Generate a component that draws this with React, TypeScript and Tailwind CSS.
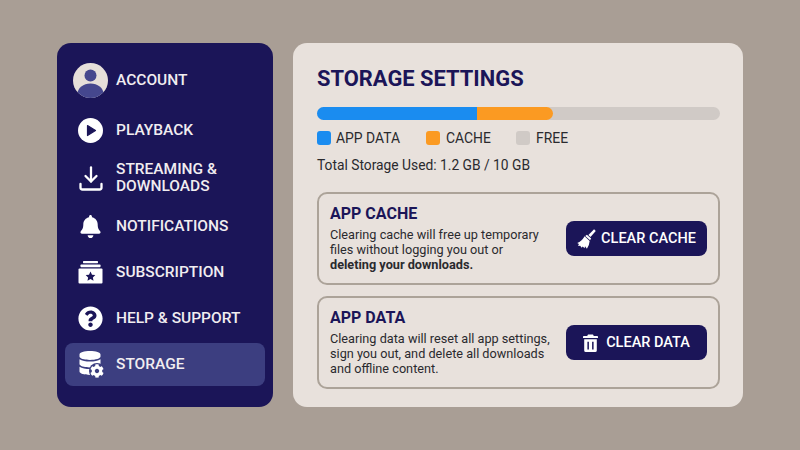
import type { ReactNode } from 'react'
import { FaBell, FaCog, FaDatabase, FaQuestionCircle } from 'react-icons/fa'

function Avatar() {
  return (
    <svg width="35" height="35" viewBox="0 0 35 35">
      <defs>
        <clipPath id="avatar-clip">
          <circle cx="17.5" cy="17.5" r="17.5" />
        </clipPath>
      </defs>
      <circle cx="17.5" cy="17.5" r="17.5" fill="#e6dfda" />
      <g clipPath="url(#avatar-clip)" fill="#45478e">
        <circle cx="17.5" cy="12.5" r="6" />
        <ellipse cx="17.5" cy="31" rx="13" ry="10.5" />
      </g>
    </svg>
  )
}

function PlayIcon() {
  return (
    <svg width="25" height="25" viewBox="0 0 25 25">
      <circle cx="12.5" cy="12.5" r="12.5" fill="#fff" />
      <path d="M9.5 7.5 L17.5 12.5 L9.5 17.5 Z" fill="#1b1558" stroke="#1b1558" strokeWidth="1.2" strokeLinejoin="round" />
    </svg>
  )
}

function DownloadIcon() {
  return (
    <svg width="24" height="25" viewBox="0 0 24 25" fill="none" stroke="#fff" strokeWidth="2.3" strokeLinecap="round" strokeLinejoin="round">
      <path d="M12 1.5 V15.5" />
      <path d="M6.5 10 L12 15.5 L17.5 10" />
      <path d="M1.5 18 V21.5 Q1.5 23.5 3.5 23.5 H20.5 Q22.5 23.5 22.5 21.5 V18" />
    </svg>
  )
}

function SubscriptionIcon() {
  return (
    <svg width="25" height="23" viewBox="0 0 25 23" fill="#fff">
      <rect x="5" y="0" width="15" height="2.2" rx="0.6" />
      <rect x="2.5" y="3.6" width="20" height="2.6" rx="0.6" />
      <path d="M1.5 7.5 H23.5 Q24.5 7.5 24.5 8.5 V21.5 Q24.5 22.5 23.5 22.5 H1.5 Q0.5 22.5 0.5 21.5 V8.5 Q0.5 7.5 1.5 7.5 Z" />
      <path
        d="M12.5 10.6 L14 13.7 L17.3 14.1 L14.9 16.4 L15.5 19.7 L12.5 18.1 L9.5 19.7 L10.1 16.4 L7.7 14.1 L11 13.7 Z"
        fill="#1b1558"
      />
    </svg>
  )
}

function StorageIcon() {
  return (
    <div className="relative w-[26px] h-[27px]">
      <FaDatabase size={24} color="#fff" />
      <div className="absolute right-[-1px] bottom-[-1px] w-[16px] h-[16px] rounded-full bg-[#3c3e80] flex items-center justify-center">
        <FaCog size={14} color="#fff" />
      </div>
    </div>
  )
}

function BroomIcon() {
  return (
    <svg width="19" height="20" viewBox="0 0 18 19" fill="#fff">
      <path d="M16.2 0.2 L17.8 1.8 L12.8 7.6 L10.8 5.8 Z" />
      <path d="M9.4 5.4 L13.4 9 L12.4 10.6 L7.8 6.6 Z" />
      <path d="M7.2 7 L12 11.3 Q11.8 15 9.4 18.8 L7.6 16.4 L7.2 18.4 L5.4 16.6 L4.4 17.8 L3 15.8 L1 16.2 L1.8 14.2 L0.2 13.2 Q4.4 12 7.2 7 Z" />
    </svg>
  )
}

function TrashIcon() {
  return (
    <svg width="15" height="18" viewBox="0 0 15 18" fill="#fff">
      <path d="M5 0.5 H10 L10.8 2 H14.2 Q15 2 15 2.8 V4 H0 V2.8 Q0 2 0.8 2 H4.2 Z" />
      <path
        fillRule="evenodd"
        d="M1.2 5.2 H13.8 V16.4 Q13.8 18 12.2 18 H2.8 Q1.2 18 1.2 16.4 Z M4.4 7.8 V15.4 H5.9 V7.8 Z M9.1 7.8 V15.4 H10.6 V7.8 Z"
      />
    </svg>
  )
}

type NavItem = { label: ReactNode; icon: ReactNode; rowClass: string }

const navItems: NavItem[] = [
  { label: 'ACCOUNT', icon: <Avatar />, rowClass: 'h-[42px]' },
  { label: 'PLAYBACK', icon: <PlayIcon />, rowClass: 'h-[42px] mt-[8px]' },
  {
    label: (
      <>
        STREAMING &amp;
        <br />
        DOWNLOADS
      </>
    ),
    icon: <DownloadIcon />,
    rowClass: 'h-[42px] mt-[6px]',
  },
  { label: 'NOTIFICATIONS', icon: <FaBell size={23} color="#fff" />, rowClass: 'h-[42px] mt-[6px]' },
  { label: 'SUBSCRIPTION', icon: <SubscriptionIcon />, rowClass: 'h-[42px] mt-[4px]' },
  { label: 'HELP & SUPPORT', icon: <FaQuestionCircle size={25} color="#fff" />, rowClass: 'h-[42px] mt-[4px]' },
  { label: 'STORAGE', icon: <StorageIcon />, rowClass: 'h-[43px] mt-[4px] bg-[#3c3e80] rounded-lg' },
]

function ActionCard({
  title,
  children,
  button,
  icon,
  iconGap,
  textClass,
}: {
  title: string
  children: ReactNode
  button: string
  icon: ReactNode
  iconGap: string
  textClass: string
}) {
  return (
    <div className="h-[93px] border-2 border-[#aca399] rounded-[10px] pl-[11px] pr-[11px] flex items-center justify-between">
      <div className={`w-[226px] ${textClass}`}>
        <h2 className="text-[16px] leading-[20px] font-bold text-[#1b1558]">{title}</h2>
        <p className="mt-[3px] text-[12.7px] leading-[15px] text-[#2a2a2e]">{children}</p>
      </div>
      <div className={`w-[141px] h-[35px] rounded-lg bg-[#1b1558] text-white flex items-center justify-center text-[14.5px] font-medium ${iconGap}`}>
        {icon}
        <span>{button}</span>
      </div>
    </div>
  )
}

export default function App() {
  return (
    <div className="w-[800px] h-[450px] bg-[#a99e95] flex gap-[20px] pl-[57px] pt-[43px] font-['Roboto',sans-serif] overflow-hidden">
      {/* Sidebar */}
      <div className="w-[216px] h-[364px] bg-[#1b1558] rounded-[14px] px-2 pt-[16px]">
        {navItems.map((item, i) => (
          <div key={i} className={`flex items-center gap-[8px] pl-[8px] ${item.rowClass}`}>
            <div className="w-[35px] flex items-center justify-center shrink-0">{item.icon}</div>
            <span className="text-[#f1edf0] text-[15.5px] leading-[17px] font-medium">{item.label}</span>
          </div>
        ))}
      </div>

      {/* Main panel */}
      <div className="w-[450px] h-[364px] bg-[#e8e1dc] rounded-[14px] pl-[24px] pr-[23px] pt-[23px]">
        <h1 className="text-[21.9px] leading-[26px] font-bold text-[#1b1558]">STORAGE SETTINGS</h1>

        <div className="mt-[15px] h-[13px] w-[403px] rounded-full bg-[#d0cac6] flex overflow-hidden">
          <div className="w-[160px] bg-[#1a8cf0]" />
          <div className="w-[76px] bg-[#fb9a22] rounded-r-full" />
        </div>

        <div className="mt-[10px] flex items-center h-[16px] text-[13.9px] text-[#2a2a2e]">
          <div className="w-[14px] h-[14px] rounded-[3px] bg-[#1a8cf0]" />
          <span className="ml-[5px] w-[90px]">APP DATA</span>
          <div className="w-[14px] h-[14px] rounded-[3px] bg-[#fb9a22]" />
          <span className="ml-[6px] w-[70px]">CACHE</span>
          <div className="w-[14px] h-[14px] rounded-[3px] bg-[#d0cac6]" />
          <span className="ml-[6px]">FREE</span>
        </div>

        <p className="mt-[11px] text-[13.8px] leading-[16px] text-[#2a2a2e]">Total Storage Used: 1.2 GB / 10 GB</p>

        <div className="mt-[19px] flex flex-col gap-[11px]">
          <ActionCard title="APP CACHE" button="CLEAR CACHE" icon={<BroomIcon />} iconGap="gap-[5px]" textClass="mt-[-2px]">
            Clearing cache will free up temporary
            <br />
            files without logging you out or
            <br />
            <b className="font-bold">deleting your downloads.</b>
          </ActionCard>
          <ActionCard title="APP DATA" button="CLEAR DATA" icon={<TrashIcon />} iconGap="gap-[8px]" textClass="mt-[-1px]">
            Clearing data will reset all app settings,
            <br />
            sign you out, and delete all downloads
            <br />
            and offline content.
          </ActionCard>
        </div>
      </div>
    </div>
  )
}
